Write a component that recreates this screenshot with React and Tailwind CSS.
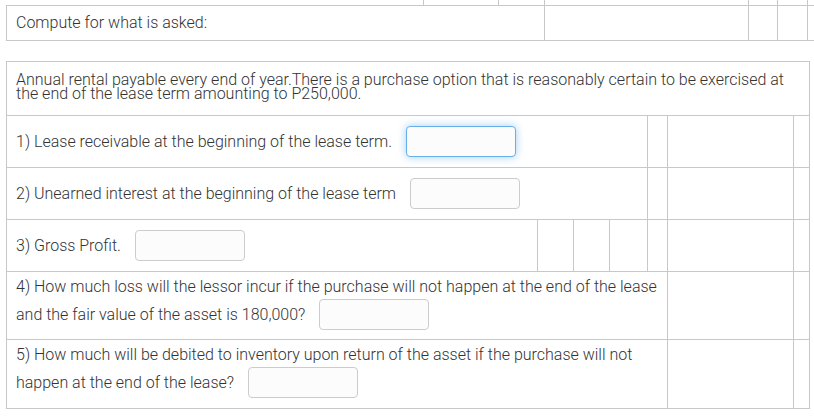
import React from "react";

const font = { fontFamily: "Roboto, 'Noto Sans', sans-serif" };

function Box({ focused }) {
  return (
    <input
      type="text"
      className={
        focused
          ? "ml-[14px] w-[110px] h-[31px] shrink-0 rounded-[4px] border border-[#66afe9] bg-[#fcfcfc] shadow-[0_0_8px_rgba(102,175,233,0.6)] outline-none"
          : "ml-[14px] w-[110px] h-[31px] shrink-0 rounded-[4px] border border-[#cccccc] bg-[#fcfcfc] outline-none"
      }
    />
  );
}

export default function App() {
  return (
    <div
      className="w-[814px] h-[417px] overflow-hidden bg-white text-[16px] font-light text-[#333333]"
      style={font}
    >
      {/* top table remnant */}
      <div className="flex h-[5px] pl-[6px]">
        <div className="w-[418px] shrink-0 border-r border-[#c8c8c8]" />
        <div className="w-[75px] shrink-0 border-r border-[#c8c8c8]" />
        <div className="w-[46px] shrink-0 border-r border-[#c8c8c8]" />
        <div className="w-[204px] shrink-0 border-r border-[#c8c8c8]" />
        <div className="w-[29px] shrink-0 border-r border-[#c8c8c8]" />
        <div className="w-[30px] shrink-0 border-r border-[#c8c8c8]" />
        <div className="w-[40px] shrink-0" />
      </div>
      <div className="ml-[6px] flex h-[36px] w-[830px] border-y border-l border-[#c8c8c8]">
        <div className="flex w-[538px] shrink-0 items-center border-r border-[#c8c8c8] pl-[9px]">
          Compute for what is asked:
        </div>
        <div className="w-[204px] shrink-0 border-r border-[#c8c8c8]" />
        <div className="w-[29px] shrink-0 border-r border-[#c8c8c8]" />
        <div className="w-[30px] shrink-0 border-r border-[#c8c8c8]" />
        <div className="w-[40px] shrink-0" />
      </div>

      {/* main table */}
      <div className="ml-[6px] mt-[20px] w-[804px] border-l border-t border-[#c8c8c8]">
        <div className="flex h-[54px] border-b border-[#c8c8c8]">
          <div className="w-[803px] shrink-0 border-r border-[#c8c8c8] pl-[9px] pt-[11px] leading-[14px]">
            Annual rental payable every end of year.There is a purchase option that is reasonably certain to be exercised at
            <br />
            the end of the lease term amounting to P250,000.
          </div>
        </div>

        <div className="flex h-[52px] border-b border-[#c8c8c8]">
          <div className="flex w-[641px] shrink-0 items-center border-r border-[#c8c8c8] pl-[9px]">
            <span>1) Lease receivable at the beginning of the lease term.</span>
            <Box focused />
          </div>
          <div className="w-[20px] shrink-0 border-r border-[#c8c8c8]" />
          <div className="w-[126px] shrink-0 border-r border-[#c8c8c8]" />
          <div className="w-[16px] shrink-0 border-r border-[#c8c8c8]" />
        </div>

        <div className="flex h-[52px] border-b border-[#c8c8c8]">
          <div className="flex w-[641px] shrink-0 items-center border-r border-[#c8c8c8] pl-[9px]">
            <span>2) Unearned interest at the beginning of the lease term</span>
            <Box />
          </div>
          <div className="w-[20px] shrink-0 border-r border-[#c8c8c8]" />
          <div className="w-[126px] shrink-0 border-r border-[#c8c8c8]" />
          <div className="w-[16px] shrink-0 border-r border-[#c8c8c8]" />
        </div>

        <div className="flex h-[52px] border-b border-[#c8c8c8]">
          <div className="flex w-[531px] shrink-0 items-center border-r border-[#c8c8c8] pl-[9px]">
            <span>3) Gross Profit.</span>
            <Box />
          </div>
          <div className="w-[36px] shrink-0 border-r border-[#c8c8c8]" />
          <div className="w-[36px] shrink-0 border-r border-[#c8c8c8]" />
          <div className="w-[38px] shrink-0 border-r border-[#c8c8c8]" />
          <div className="w-[20px] shrink-0 border-r border-[#c8c8c8]" />
          <div className="w-[126px] shrink-0 border-r border-[#c8c8c8]" />
          <div className="w-[16px] shrink-0 border-r border-[#c8c8c8]" />
        </div>

        <div className="flex h-[68px] border-b border-[#c8c8c8]">
          <div className="w-[661px] shrink-0 border-r border-[#c8c8c8] pl-[9px] pt-[3px]">
            <div className="h-[24px] whitespace-nowrap leading-[24px]">
              4) How much loss will the lessor incur if the purchase will not happen at the end of the lease
            </div>
            <div className="flex h-[31px] items-center">
              <span>and the fair value of the asset is 180,000?</span>
              <Box />
            </div>
          </div>
          <div className="w-[126px] shrink-0 border-r border-[#c8c8c8]" />
          <div className="w-[16px] shrink-0 border-r border-[#c8c8c8]" />
        </div>

        <div className="flex h-[69px] border-b border-[#c8c8c8]">
          <div className="w-[661px] shrink-0 border-r border-[#c8c8c8] pl-[9px] pt-[3px]">
            <div className="h-[24px] whitespace-nowrap leading-[24px]">
              5) How much will be debited to inventory upon return of the asset if the purchase will not
            </div>
            <div className="flex h-[31px] items-center">
              <span>happen at the end of the lease?</span>
              <Box />
            </div>
          </div>
          <div className="w-[126px] shrink-0 border-r border-[#c8c8c8]" />
          <div className="w-[16px] shrink-0 border-r border-[#c8c8c8]" />
        </div>
      </div>
    </div>
  );
}
